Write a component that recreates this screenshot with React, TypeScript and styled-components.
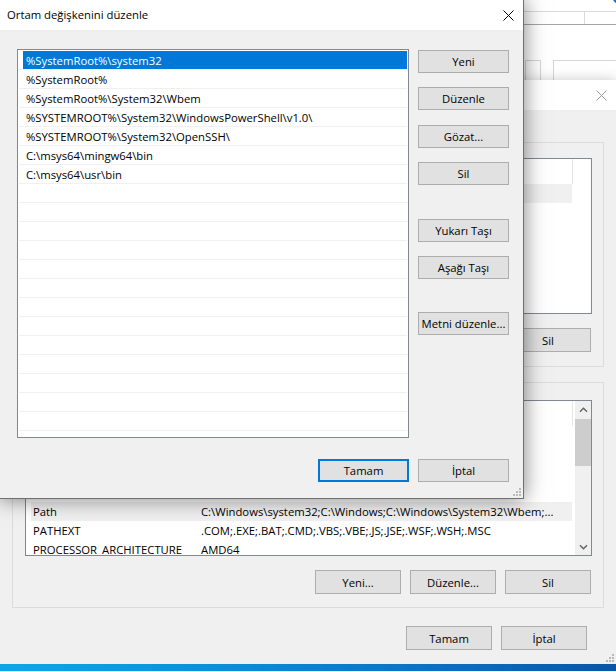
import React from 'react';
import styled, { createGlobalStyle } from 'styled-components';

const GlobalStyle = createGlobalStyle`
  html, body {
    margin: 0;
    padding: 0;
  }
  body {
    width: 616px;
    height: 671px;
    overflow: hidden;
    background: #f0f0f0;
    font-family: "Segoe UI", "Open Sans", "Noto Sans", sans-serif;
    font-size: 11.3px;
    color: #000;
  }
`;

const Screen = styled.div`
  width: 616px;
  height: 671px;
  display: flex;
  flex-direction: column;
  overflow: hidden;
`;

const Desk = styled.div`
  position: relative;
  flex: 1;
  overflow: hidden;
  background: #f0f0f0;
`;

const Taskbar = styled.div`
  height: 7px;
  flex: none;
  background: linear-gradient(90deg, #0ea6e8 0%, #0a8fdb 35%, #0b70c4 70%, #0a55a6 100%);
`;

type WinProps = { $x: number; $y: number; $w: number; $h: number };

const Window = styled.div<WinProps>`
  position: absolute;
  left: ${p => p.$x}px;
  top: ${p => p.$y}px;
  width: ${p => p.$w}px;
  height: ${p => p.$h}px;
  box-sizing: border-box;
  display: flex;
  flex-direction: column;
  background: #f0f0f0;
`;

const SysFrame = styled(Window)`
  background: #fff;
`;

const EnvFrame = styled(Window)`
  box-shadow: 0 0 12px rgba(0, 0, 0, 0.22);
`;

const EditFrame = styled(Window)`
  border: 1px solid #707070;
  box-shadow: 0 0 20px rgba(0, 0, 0, 0.5);
`;

const TitleBar = styled.div<{ $inactive?: boolean }>`
  height: 30px;
  flex: none;
  display: flex;
  align-items: center;
  background: #fff;
  padding-left: 7px;
  color: ${p => (p.$inactive ? '#9a9a9a' : '#000')};
`;

const TitleText = styled.span`
  flex: 1;
  font-size: 11.3px;
  line-height: 30px;
  white-space: nowrap;
  overflow: hidden;
`;

const CloseBox = styled.span`
  width: 30px;
  height: 30px;
  flex: none;
  display: flex;
  align-items: center;
  justify-content: center;
`;

const CloseIcon = () => (
  <svg width="11" height="11" viewBox="0 0 11 11">
    <path d="M0.5 0.5 L10.5 10.5 M10.5 0.5 L0.5 10.5" stroke="currentColor" strokeWidth="1" fill="none" />
  </svg>
);

const Grip = styled.div`
  position: absolute;
  right: 2px;
  bottom: 2px;
  width: 8px;
  height: 8px;
  line-height: 0;
`;

const GripDots = () => (
  <svg width="8" height="8" viewBox="0 0 8 8">
    <g fill="#b9b9b9">
      <rect x="6" y="0" width="2" height="2" />
      <rect x="3" y="3" width="2" height="2" />
      <rect x="6" y="3" width="2" height="2" />
      <rect x="0" y="6" width="2" height="2" />
      <rect x="3" y="6" width="2" height="2" />
      <rect x="6" y="6" width="2" height="2" />
    </g>
  </svg>
);

const Button = styled.button<{ $w: number; $h: number; $mt?: number; $default?: boolean }>`
  box-sizing: border-box;
  width: ${p => p.$w}px;
  height: ${p => p.$h}px;
  margin-top: ${p => p.$mt ?? 0}px;
  flex: none;
  padding: 0;
  background: #e1e1e1;
  border: ${p => (p.$default ? '2px solid #0078d7' : '1px solid #adadad')};
  font-family: inherit;
  font-size: 11.3px;
  color: #000;
  text-align: center;
  white-space: nowrap;
`;

/* ---------- background: system properties window ---------- */

const SysTop = styled.div`
  height: 11px;
  flex: none;
  display: flex;
  justify-content: flex-end;
  align-items: flex-start;
  border-bottom: 1px solid #dadada;
  overflow: hidden;
`;

const HelpDot = () => (
  <svg width="20" height="5" viewBox="0 0 20 5">
    <circle cx="10" cy="-4" r="8" fill="#1a73c8" />
  </svg>
);

const SysTabStrip = styled.div`
  height: 12px;
  flex: none;
  display: flex;
  border-bottom: 1px solid #a5a5a5;
`;

const SysTab = styled.div<{ $w: number }>`
  width: ${p => p.$w}px;
  flex: none;
  border-right: 1px solid #dadada;
`;

const SysPanel = styled.div`
  flex: 1;
  display: flex;
  align-items: flex-end;
  gap: 12px;
  padding-left: 55px;
`;

const SysField = styled.div<{ $w: number }>`
  width: ${p => p.$w}px;
  height: 20px;
  box-sizing: border-box;
  border: 1px solid #d6d6d6;
  border-bottom: none;
  background: #fff;
`;

/* ---------- environment variables window ---------- */

const EnvBody = styled.div`
  flex: 1;
  display: flex;
  flex-direction: column;
  padding: 32px 12px 0 12px;
`;

const GroupBox = styled.div<{ $h: number; $pt: number; $pb: number; $mt?: number }>`
  box-sizing: border-box;
  height: ${p => p.$h}px;
  margin-top: ${p => p.$mt ?? 0}px;
  border: 1px solid #dcdcdc;
  padding: ${p => p.$pt}px 11px ${p => p.$pb}px 12px;
  display: flex;
  flex-direction: column;
  gap: 14px;
`;

const ButtonRow = styled.div<{ $mt?: number; $pr?: number }>`
  display: flex;
  justify-content: flex-end;
  gap: 9px;
  margin-top: ${p => p.$mt ?? 0}px;
  padding-right: ${p => p.$pr ?? 0}px;
`;

const VarList = styled.div`
  height: 156px;
  flex: none;
  box-sizing: border-box;
  border: 1px solid #828790;
  background: #fff;
  display: flex;
  overflow: hidden;
`;

const VarTable = styled.div`
  width: 548px;
  flex: none;
  display: flex;
  flex-direction: column;
`;

const VarHeader = styled.div`
  height: 25px;
  flex: none;
  display: grid;
  grid-template-columns: 169px 378px;
`;

const HeaderCell = styled.div`
  border-right: 1px solid #e5e5e5;
`;

const VarRow = styled.div<{ $selected?: boolean }>`
  height: 19px;
  flex: none;
  margin-left: 5px;
  width: 541px;
  display: grid;
  grid-template-columns: 168px 373px;
  background: ${p => (p.$selected ? '#f0f0f0' : 'transparent')};
`;

const VarCell = styled.div`
  padding: 1px 0 0 2px;
  line-height: 18px;
  white-space: nowrap;
  overflow: hidden;
`;

const ScrollBar = styled.div`
  width: 17px;
  flex: none;
  margin-left: 1px;
  background: #f0f0f0;
  display: flex;
  flex-direction: column;
  align-items: center;
`;

const ScrollArrow = styled.div`
  height: 17px;
  width: 17px;
  flex: none;
  display: flex;
  align-items: center;
  justify-content: center;
`;

const ScrollTrack = styled.div`
  flex: 1;
  width: 100%;
  display: flex;
  flex-direction: column;
`;

const ScrollThumb = styled.div`
  height: 47px;
  margin: 1px 1px 0 0;
  background: #cdcdcd;
`;

const Chevron = ({ down }: { down?: boolean }) => (
  <svg width="9" height="6" viewBox="0 0 9 6">
    <path
      d={down ? 'M1 1.2 L4.5 4.7 L8 1.2' : 'M1 4.8 L4.5 1.3 L8 4.8'}
      stroke="#606060"
      strokeWidth="1.4"
      fill="none"
    />
  </svg>
);

/* ---------- front: edit variable dialog ---------- */

const EditBody = styled.div`
  position: relative;
  flex: 1;
  display: grid;
  grid-template-columns: 392px 91px;
  grid-template-rows: 389px 23px;
  column-gap: 9px;
  row-gap: 21px;
  padding: 19px 14px 0 17px;
  align-content: start;
`;

const PathList = styled.div`
  box-sizing: border-box;
  border: 1px solid #828790;
  background: #fff;
  padding: 1px 1px 0 1px;
  overflow: hidden;
  display: flex;
  flex-direction: column;
`;

const PathRow = styled.div`
  height: 19px;
  flex: none;
  box-sizing: border-box;
  border-bottom: 1px solid #f0f0f0;
  padding-left: 4px;
  display: flex;
`;

const PathText = styled.div<{ $selected?: boolean }>`
  flex: 1;
  padding: 1px 0 0 3px;
  line-height: 17px;
  white-space: nowrap;
  overflow: hidden;
  background: ${p => (p.$selected ? '#0078d7' : 'transparent')};
  color: ${p => (p.$selected ? '#fff' : '#000')};
`;

const SideButtons = styled.div`
  display: flex;
  flex-direction: column;
  padding-top: 1px;
`;

const DialogFooter = styled.div`
  grid-column: 1 / span 2;
  display: flex;
  justify-content: flex-end;
  gap: 9px;
`;

const paths = [
  '%SystemRoot%\\system32',
  '%SystemRoot%',
  '%SystemRoot%\\System32\\Wbem',
  '%SYSTEMROOT%\\System32\\WindowsPowerShell\\v1.0\\',
  '%SYSTEMROOT%\\System32\\OpenSSH\\',
  'C:\\msys64\\mingw64\\bin',
  'C:\\msys64\\usr\\bin',
];

// the rows hidden behind the front dialog carry no text
const userVars: [string, string][] = [
  ['', ''],
  ['', ''],
  ['', ''],
  ['', ''],
];

const systemVars: [string, string][] = [
  ['', ''],
  ['', ''],
  ['', ''],
  ['', ''],
  ['Path', 'C:\\Windows\\system32;C:\\Windows;C:\\Windows\\System32\\Wbem;...'],
  ['PATHEXT', '.COM;.EXE;.BAT;.CMD;.VBS;.VBE;.JS;.JSE;.WSF;.WSH;.MSC'],
  ['PROCESSOR_ARCHITECTURE', 'AMD64'],
];

const sideButtons: [string, number][] = [
  ['Yeni', 0],
  ['Düzenle', 14],
  ['Gözat...', 15],
  ['Sil', 14],
  ['Yukarı Taşı', 34],
  ['Aşağı Taşı', 14],
  ['Metni düzenle...', 33],
];

function VarTableView({ rows, selected }: { rows: [string, string][]; selected: number }) {
  return (
    <VarTable>
      <VarHeader>
        <HeaderCell />
        <HeaderCell />
      </VarHeader>
      {rows.map(([name, value], i) => (
        <VarRow key={i} $selected={i === selected}>
          <VarCell>{name}</VarCell>
          <VarCell>{value}</VarCell>
        </VarRow>
      ))}
    </VarTable>
  );
}

export default function App() {
  const emptyRows = Array.from({ length: 14 });

  return (
    <Screen>
      <GlobalStyle />
      <Desk>
        <SysFrame $x={470} $y={0} $w={160} $h={80}>
          <SysTop>
            <HelpDot />
          </SysTop>
          <SysTabStrip>
            <SysTab $w={114} />
          </SysTabStrip>
          <SysPanel>
            <SysField $w={16} />
            <SysField $w={80} />
          </SysPanel>
        </SysFrame>

        <EnvFrame $x={0} $y={80} $w={616} $h={584}>
          <TitleBar $inactive>
            <TitleText />
            <CloseBox>
              <CloseIcon />
            </CloseBox>
          </TitleBar>
          <EnvBody>
            <GroupBox $h={225} $pt={15} $pb={14}>
              <VarList>
                <VarTableView rows={userVars} selected={0} />
              </VarList>
              <ButtonRow $pr={1}>
                <Button $w={86} $h={24}>Sil</Button>
              </ButtonRow>
            </GroupBox>
            <GroupBox $h={226} $pt={17} $pb={13} $mt={15}>
              <VarList>
                <VarTableView rows={systemVars} selected={4} />
                <ScrollBar>
                  <ScrollArrow>
                    <Chevron />
                  </ScrollArrow>
                  <ScrollTrack>
                    <ScrollThumb />
                  </ScrollTrack>
                  <ScrollArrow>
                    <Chevron down />
                  </ScrollArrow>
                </ScrollBar>
              </VarList>
              <ButtonRow $pr={1}>
                <Button $w={86} $h={24}>Yeni...</Button>
                <Button $w={86} $h={24}>Düzenle...</Button>
                <Button $w={86} $h={24}>Sil</Button>
              </ButtonRow>
            </GroupBox>
            <ButtonRow $mt={18} $pr={17}>
              <Button $w={86} $h={24}>Tamam</Button>
              <Button $w={86} $h={24}>İptal</Button>
            </ButtonRow>
          </EnvBody>
          <Grip>
            <GripDots />
          </Grip>
        </EnvFrame>

        <EditFrame $x={-1} $y={-1} $w={525} $h={500}>
          <TitleBar>
            <TitleText>Ortam değişkenini düzenle</TitleText>
            <CloseBox>
              <CloseIcon />
            </CloseBox>
          </TitleBar>
          <EditBody>
            <PathList>
              {paths.map((p, i) => (
                <PathRow key={p}>
                  <PathText $selected={i === 0}>{p}</PathText>
                </PathRow>
              ))}
              {emptyRows.map((_, i) => (
                <PathRow key={'e' + i}>
                  <PathText />
                </PathRow>
              ))}
            </PathList>
            <SideButtons>
              {sideButtons.map(([label, mt]) => (
                <Button key={label} $w={91} $h={23} $mt={mt}>
                  {label}
                </Button>
              ))}
            </SideButtons>
            <DialogFooter>
              <Button $w={91} $h={23} $default>
                Tamam
              </Button>
              <Button $w={91} $h={23}>
                İptal
              </Button>
            </DialogFooter>
          </EditBody>
          <Grip>
            <GripDots />
          </Grip>
        </EditFrame>
      </Desk>
      <Taskbar />
    </Screen>
  );
}
